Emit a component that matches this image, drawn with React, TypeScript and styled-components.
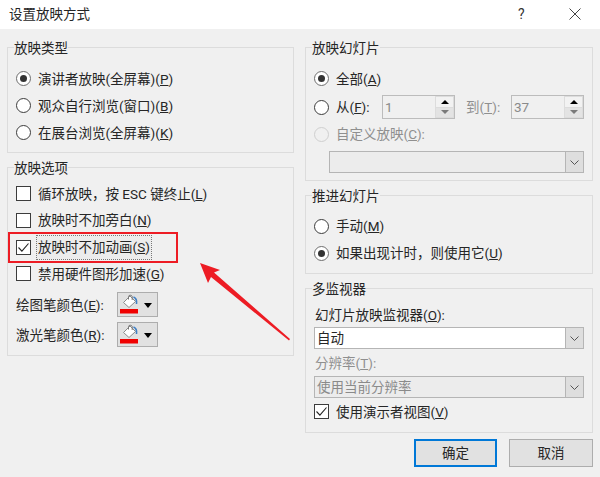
import React from 'react'
import styled, { createGlobalStyle } from 'styled-components'

const GlobalStyle = createGlobalStyle`
  html, body { margin: 0; padding: 0; background: #f0f0f0; }
  * { box-sizing: border-box; }
`

const Dialog = styled.div`
  position: relative;
  width: 600px;
  height: 477px;
  overflow: hidden;
  background: #f0f0f0;
  color: #262626;
  font-family: Roboto, "Noto Sans CJK SC", sans-serif;
  font-size: 13.5px;
  line-height: 20px;
`

const TitleBar = styled.div`
  display: flex;
  align-items: center;
  height: 29px;
  padding: 0 19px 2px 9px;
  background: #fff;
  font-size: 13.5px;
`

const Title = styled.div`
  flex: 1;
`

const HelpButton = styled.div`
  width: 51px;
  font-size: 14px;
  color: #333;
`

const Body = styled.div`
  display: grid;
  grid-template-columns: 287px 288px;
  column-gap: 11px;
  padding: 18px 0 0 7px;
`

const Column = styled.div`
  display: flex;
  flex-direction: column;
  gap: 14px;
`

const Group = styled.section<{ $height: number; $pad?: number }>`
  height: ${({ $height }) => $height}px;
  padding: 0 8px;
  border: 1px solid #dcdcdc;
`

const Legend = styled.div<{ $pad?: number }>`
  width: fit-content;
  margin: -10px 0 ${({ $pad }) => $pad ?? 7}px -2px;
  background: #f0f0f0;
  line-height: 20px;
`

const Row = styled.label<{ $height?: number; $muted?: boolean }>`
  display: flex;
  align-items: center;
  gap: 7px;
  height: ${({ $height }) => $height ?? 27}px;
  white-space: nowrap;
  color: ${({ $muted }) => ($muted ? '#8f8f8f' : 'inherit')};
`

const RadioMark = styled.span<{ $on?: boolean; $disabled?: boolean }>`
  display: flex;
  align-items: center;
  justify-content: center;
  flex: none;
  width: 15px;
  height: 15px;
  border-radius: 50%;
  background: ${({ $disabled }) => ($disabled ? '#f0f0f0' : '#fff')};
  border: 1px solid ${({ $on, $disabled }) => ($disabled ? '#cfcfcf' : $on ? '#6e6e6e' : '#3c3c3c')};

  &::after {
    content: '';
    display: ${({ $on }) => ($on ? 'block' : 'none')};
    width: 7px;
    height: 7px;
    border-radius: 50%;
    background: #333;
  }
`

const CheckMark = styled.span`
  display: flex;
  align-items: center;
  justify-content: center;
  flex: none;
  width: 15px;
  height: 15px;
  background: #fff;
  border: 1px solid #3c3c3c;
`

const FocusLabel = styled.span`
  margin-left: -1px;
  padding: 0 1px;
  line-height: 23px;
  outline: 1px dotted #777;
  background: #ececec;
`

const ColorRow = styled.div`
  display: flex;
  align-items: center;
  height: 25px;
  margin-top: 5px;
`

const ColorLabel = styled.span`
  width: 101px;
  white-space: nowrap;
`

const ColorButton = styled.div`
  display: flex;
  align-items: center;
  width: 41px;
  height: 25px;
  padding-left: 2px;
  gap: 2px;
  background: #e1e1e1;
  border: 1px solid #adadad;
`

const Caret = styled.span`
  width: 0;
  height: 0;
  margin-top: 1px;
  border-left: 4.5px solid transparent;
  border-right: 4.5px solid transparent;
  border-top: 5px solid #000;
`

const FromRow = styled.div`
  display: flex;
  align-items: center;
  height: 30px;
  white-space: nowrap;
`

const FromLabel = styled.span`
  width: 46px;
  margin-left: 7px;
`

const ToLabel = styled.span`
  width: 45px;
  margin-left: 11px;
  color: #8f8f8f;
`

const Spin = styled.div`
  display: flex;
  width: 73px;
  height: 24px;
  border: 1px solid #bcbcbc;
  background: #f0f0f0;
`

const SpinValue = styled.span`
  flex: 1;
  padding-left: 2px;
  line-height: 22px;
  color: #8a8a8a;
`

const SpinButtons = styled.div`
  display: flex;
  flex-direction: column;
  width: 19px;
  gap: 1px;
  padding: 1px;
  background: #dcdcdc;
`

const SpinButton = styled.div<{ $up?: boolean }>`
  display: flex;
  align-items: center;
  justify-content: center;
  flex: 1;
  background: ${({ $up }) => ($up ? '#f2f2f2' : '#e3e3e3')};

  &::after {
    content: '';
    border-left: 4px solid transparent;
    border-right: 4px solid transparent;
    ${({ $up }) => ($up ? 'border-bottom: 4px solid #000;' : 'border-top: 4px solid #7a7a7a;')}
  }
`

const Combo = styled.div<{ $active?: boolean; $indent?: number; $top?: number }>`
  display: flex;
  height: 22px;
  margin: ${({ $top }) => $top ?? 0}px 0 0 ${({ $indent }) => $indent ?? 0}px;
  border: 1px solid #b5b5b5;
  background: ${({ $active }) => ($active ? '#fff' : '#ececec')};
  color: ${({ $active }) => ($active ? 'inherit' : '#8a8a8a')};
`

const ComboValue = styled.span`
  flex: 1;
  padding-left: 2px;
  line-height: 20px;
`

const ComboArrow = styled.span`
  display: flex;
  align-items: center;
  justify-content: center;
  width: 18px;
  background: #dedede;
  border-left: 1px solid #b5b5b5;
`

const FieldLabel = styled.div<{ $muted?: boolean; $top: number; $bottom: number }>`
  margin: ${({ $top }) => $top}px 0 ${({ $bottom }) => $bottom}px 1px;
  color: ${({ $muted }) => ($muted ? '#8f8f8f' : 'inherit')};
`

const ButtonBar = styled.div`
  display: flex;
  justify-content: flex-end;
  gap: 12px;
  margin-top: -8px;
`

const DialogButton = styled.div<{ $primary?: boolean }>`
  display: flex;
  align-items: center;
  justify-content: center;
  width: ${({ $primary }) => ($primary ? 83 : 84)}px;
  height: 28px;
  background: #e1e1e1;
  border: ${({ $primary }) => ($primary ? '2px solid #0078d7' : '1px solid #adadad')};
`

const Callout = styled.div`
  position: absolute;
  left: 8px;
  top: 232px;
  width: 170px;
  height: 31px;
  border: 2px solid #ed1c24;
  pointer-events: none;
`

const ArrowOverlay = styled.svg`
  position: absolute;
  left: 190px;
  top: 255px;
`

const Chevron = () => (
  <svg width="9" height="5" viewBox="0 0 9 5">
    <path d="M.5.5l4 4 4-4" fill="none" stroke="#555" />
  </svg>
)

const Tick = () => (
  <svg width="13" height="13" viewBox="0 0 13 13">
    <path d="M1.5 6.5l3.4 3.6L11.5 2.5" fill="none" stroke="#222" strokeWidth="1.1" />
  </svg>
)

const CloseGlyph = () => (
  <svg width="12" height="12" viewBox="0 0 12 12">
    <path d="M.5.5l11 11M11.5.5l-11 11" fill="none" stroke="#444" />
  </svg>
)

const PaintBucket = () => (
  <svg width="22" height="23" viewBox="0 0 22 23">
    <path d="M10 3L3.500 9.500l5.500 5 6.500-6z" fill="#fff" stroke="#8a8a8a" />
    <path d="M8.500 6.500V3.500C8.500 1.800 12 1.800 12.200 3.500V7" fill="none" stroke="#777" />
    <path d="M13.500 4c2.500 1 3.500 3.500 3 7" fill="none" stroke="#3f7fc4" strokeWidth="1.6" />
    <rect x="0" y="16" width="18" height="4.500" fill="#f00000" />
  </svg>
)

type RadioRowProps = { on?: boolean; disabled?: boolean; height?: number; children: React.ReactNode }

function RadioRow({ on, disabled, height, children }: RadioRowProps) {
  return (
    <Row $height={height} $muted={disabled}>
      <RadioMark $on={on} $disabled={disabled} />
      <span>{children}</span>
    </Row>
  )
}

function CheckRow({ checked, height, children }: { checked?: boolean; height?: number; children: React.ReactNode }) {
  return (
    <Row $height={height}>
      <CheckMark>{checked && <Tick />}</CheckMark>
      {children}
    </Row>
  )
}

function ColorPicker({ label, hotkey }: { label: string; hotkey: string }) {
  return (
    <ColorRow>
      <ColorLabel>
        {label}(<u>{hotkey}</u>):
      </ColorLabel>
      <ColorButton>
        <PaintBucket />
        <Caret />
      </ColorButton>
    </ColorRow>
  )
}

function SpinBox({ value }: { value: string }) {
  return (
    <Spin>
      <SpinValue>{value}</SpinValue>
      <SpinButtons>
        <SpinButton $up />
        <SpinButton />
      </SpinButtons>
    </Spin>
  )
}

function ComboBox({ value, active, indent, top }: { value?: string; active?: boolean; indent?: number; top?: number }) {
  return (
    <Combo $active={active} $indent={indent} $top={top}>
      <ComboValue>{value}</ComboValue>
      <ComboArrow>
        <Chevron />
      </ComboArrow>
    </Combo>
  )
}

export default function App() {
  return (
    <Dialog>
      <GlobalStyle />
      <TitleBar>
        <Title>设置放映方式</Title>
        <HelpButton>?</HelpButton>
        <CloseGlyph />
      </TitleBar>
      <Body>
        <Column>
          <Group $height={106}>
            <Legend>放映类型</Legend>
            <RadioRow on>
              演讲者放映(全屏幕)(<u>P</u>)
            </RadioRow>
            <RadioRow>
              观众自行浏览(窗口)(<u>B</u>)
            </RadioRow>
            <RadioRow>
              在展台浏览(全屏幕)(<u>K</u>)
            </RadioRow>
          </Group>
          <Group $height={189}>
            <Legend $pad={2.5}>放映选项</Legend>
            <CheckRow height={26.67}>
              <span>
                循环放映，按 ESC 键终止(<u>L</u>)
              </span>
            </CheckRow>
            <CheckRow height={26.67}>
              <span>
                放映时不加旁白(<u>N</u>)
              </span>
            </CheckRow>
            <CheckRow checked height={26.67}>
              <FocusLabel>
                放映时不加动画(<u>S</u>)
              </FocusLabel>
            </CheckRow>
            <CheckRow height={26.67}>
              <span>
                禁用硬件图形加速(<u>G</u>)
              </span>
            </CheckRow>
            <ColorPicker label="绘图笔颜色" hotkey="E" />
            <ColorPicker label="激光笔颜色" hotkey="R" />
          </Group>
        </Column>
        <Column>
          <Group $height={134}>
            <Legend>放映幻灯片</Legend>
            <RadioRow on>
              全部(<u>A</u>)
            </RadioRow>
            <FromRow>
              <RadioMark />
              <FromLabel>
                从(<u>F</u>):
              </FromLabel>
              <SpinBox value="1" />
              <ToLabel>
                到(<u>T</u>):
              </ToLabel>
              <SpinBox value="37" />
            </FromRow>
            <RadioRow disabled height={24}>
              自定义放映(<u>C</u>):
            </RadioRow>
            <ComboBox indent={15} top={5} />
          </Group>
          <Group $height={79}>
            <Legend $pad={6.5}>推进幻灯片</Legend>
            <RadioRow>
              手动(<u>M</u>)
            </RadioRow>
            <RadioRow on>
              如果出现计时，则使用它(<u>U</u>)
            </RadioRow>
          </Group>
          <Group $height={145}>
            <Legend $pad={0}>多监视器</Legend>
            <FieldLabel $top={6} $bottom={2}>
              幻灯片放映监视器(<u>O</u>):
            </FieldLabel>
            <ComboBox value="自动" active />
            <FieldLabel $top={4} $bottom={3} $muted>
              分辨率(<u>T</u>):
            </FieldLabel>
            <ComboBox value="使用当前分辨率" />
            <CheckRow checked>
              <span>
                使用演示者视图(<u>V</u>)
              </span>
            </CheckRow>
          </Group>
          <ButtonBar>
            <DialogButton $primary>确定</DialogButton>
            <DialogButton>取消</DialogButton>
          </ButtonBar>
        </Column>
      </Body>
      <Callout />
      <ArrowOverlay width="110" height="95" viewBox="190 255 110 95">
        <polygon points="200,263 220,270 214,272.500 290,339 289,340.500 211,277 208,283" fill="#ed1c24" />
      </ArrowOverlay>
    </Dialog>
  )
}
